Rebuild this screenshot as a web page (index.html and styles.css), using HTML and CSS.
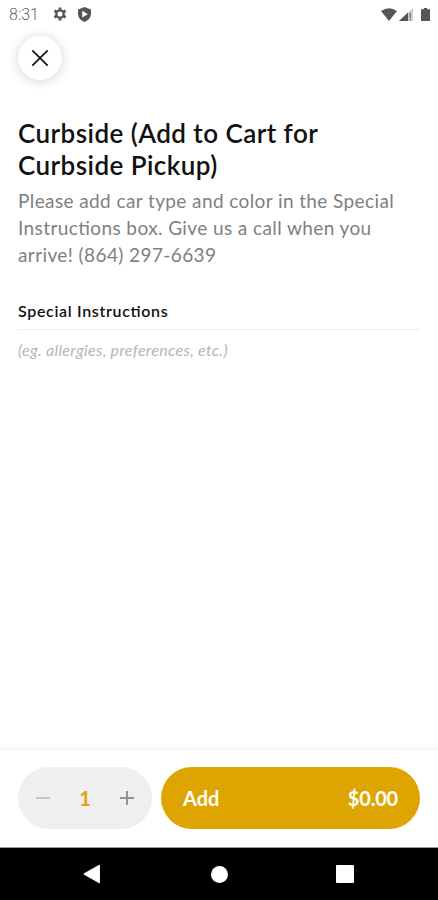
FILE: index.html
```html
<!DOCTYPE html>
<html lang="en">
    <head>
        <meta charset="utf-8">
        <title>Add to Cart</title>
        <link rel="stylesheet" href="styles.css">
    </head>
    <body>
        <div class="status-bar">
            <span class="time">8:31</span>
            <svg class="gear" width="14" height="14" viewBox="0 0 14 14">
                <circle cx="7" cy="7" r="3.7" fill="none" stroke="#555" stroke-width="2.3"/>
                <path d="M7 .5v2.3M7 11.2v2.3M1.4 3.7l2 1.2M10.6 9.1l2 1.2M1.4 10.3l2-1.2M10.6 4.9l2-1.2" stroke="#555" stroke-width="2.8"/>
            </svg>
            <svg class="shield" width="13" height="15" viewBox="0 0 13 15">
                <path d="M6.5 0L13 2.4v4.4c0 3.7-2.6 6.6-6.5 8.2C2.6 13.4 0 10.5 0 6.8V2.4z" fill="#555"/>
                <path d="M4.2 3.8l5.6 3.4-5.600 3.400z" fill="#fff"/>
            </svg>
            <div class="signals">
                <svg width="16" height="13" viewBox="0 0 16 13">
                    <path d="M0 3Q8-2.600 16 3L8 13z" fill="#555"/>
                </svg>
                <svg class="cell" width="14" height="13" viewBox="0 0 14 13">
                    <path d="M0 13L14 0v13z" fill="#ccc"/>
                    <path d="M0 13L9 4.6V13z" fill="#555"/>
                    <path d="M11.3 5v5M11.3 11v1.5" stroke="#777" stroke-width="1.3"/>
                </svg>
                <svg class="battery" width="9" height="13" viewBox="0 0 9 13">
                    <path d="M2.8 0h3.4v1.3H9V13H0V1.3h2.8z" fill="#555"/>
                </svg>
            </div>
        </div>

        <button class="close" aria-label="Close">
            <svg width="18" height="18" viewBox="0 0 18 18">
                <path d="M1.3 1.3l15.4 15.4M16.7 1.3L1.3 16.7" stroke="#111" stroke-width="1.7"/>
            </svg>
        </button>

        <main>
            <h1>Curbside (Add to Cart for Curbside Pickup)</h1>
            <p class="description">Please add car type and color in the Special Instructions box. Give us a call when you arrive! (864) 297-6639</p>
            <h2>Special Instructions</h2>
            <div class="placeholder">(eg. allergies, preferences, etc.)</div>
        </main>

        <div class="cart-bar">
            <div class="quantity">
                <svg width="14" height="14" viewBox="0 0 14 14">
                    <path d="M0 7h14" stroke="#bdbdbd" stroke-width="1.7"/>
                </svg>
                <span class="count">1</span>
                <svg width="14" height="14" viewBox="0 0 14 14">
                    <path d="M0 7h14M7 0v14" stroke="#929292" stroke-width="2"/>
                </svg>
            </div>
            <button class="add">
                <span>Add</span>
                <span class="price">$0.00</span>
            </button>
        </div>

        <div class="nav-bar">
            <svg width="18" height="20" viewBox="0 0 18 20">
                <path d="M1.5 10L16.2 1.6v16.8z" fill="#fff" stroke="#fff" stroke-width="1.5" stroke-linejoin="round"/>
            </svg>
            <div class="home"></div>
            <div class="recent"></div>
        </div>
    </body>
</html>
```

FILE: styles.css
```css
* {
    box-sizing: border-box;
}
body {
    margin: 0;
    height: 900px;
    display: flex;
    flex-direction: column;
    background: #fff;
    color: #111;
    font-family: Lato, "Open Sans", sans-serif;
}
svg {
    display: block;
    flex-shrink: 0;
}
.status-bar {
    height: 28px;
    padding: 0 8px 0 9px;
    display: flex;
    align-items: center;
}
.time {
    width: 44px;
    color: #666;
    font-family: Roboto, sans-serif;
    font-size: 16px;
    font-weight: 300;
}
.shield {
    margin-left: 11px;
}
.signals {
    margin-left: auto;
    display: flex;
}
.cell {
    margin-left: 2px;
}
.battery {
    margin-left: 8px;
}
.close {
    width: 44px;
    height: 44px;
    margin: 8px 0 0 18px;
    padding: 0;
    display: flex;
    align-items: center;
    justify-content: center;
    border: 0;
    border-radius: 50%;
    background: #fff;
    box-shadow: 0 1px 12px rgba(0, 0, 0, .18);
}
main {
    flex: 1;
    padding: 37px 18px 0;
}
h1 {
    margin: 0;
    font-size: 26px;
    font-weight: 600;
    line-height: 32px;
    letter-spacing: .45px;
}
.description {
    margin: 6px 0 0;
    color: #808080;
    font-size: 19px;
    line-height: 27px;
    letter-spacing: .4px;
    font-feature-settings: "liga" 1;
}
h2 {
    margin: 33px 0 0;
    padding-bottom: 8px;
    border-bottom: 1px solid #eee;
    font-size: 16px;
    font-weight: 600;
    line-height: 20px;
    letter-spacing: .67px;
    font-feature-settings: "liga" 1;
}
.placeholder {
    margin-top: 10px;
    color: #b5b5b5;
    font-size: 16px;
    font-style: italic;
    line-height: 20px;
    letter-spacing: .3px;
}
.cart-bar {
    height: 101px;
    padding: 17px 18px 0;
    display: flex;
    gap: 9px;
    border-top: 3px solid #f8f8f8;
    border-bottom: 1px solid #999;
}
.quantity {
    width: 134px;
    height: 62px;
    padding: 0 18px;
    display: flex;
    align-items: center;
    justify-content: space-between;
    border-radius: 31px;
    background: #efefef;
}
.count {
    color: #dfa31c;
    font-size: 20px;
    font-weight: 700;
}
.add {
    flex: 1;
    height: 62px;
    padding: 0 22px;
    display: flex;
    align-items: center;
    justify-content: space-between;
    border: 0;
    border-radius: 31px;
    background: #dea500;
    color: #fff;
    font-family: inherit;
    font-size: 20px;
    font-weight: 700;
}
.price {
    letter-spacing: -.2px;
}
.nav-bar {
    height: 52px;
    padding: 0 84px 0 83px;
    display: flex;
    align-items: center;
    justify-content: space-between;
    background: #000;
}
.home {
    width: 17px;
    height: 17px;
    margin-left: 1px;
    border-radius: 50%;
    background: #fff;
}
.recent {
    width: 18px;
    height: 18px;
    border-radius: 1px;
    background: #fff;
}
```
